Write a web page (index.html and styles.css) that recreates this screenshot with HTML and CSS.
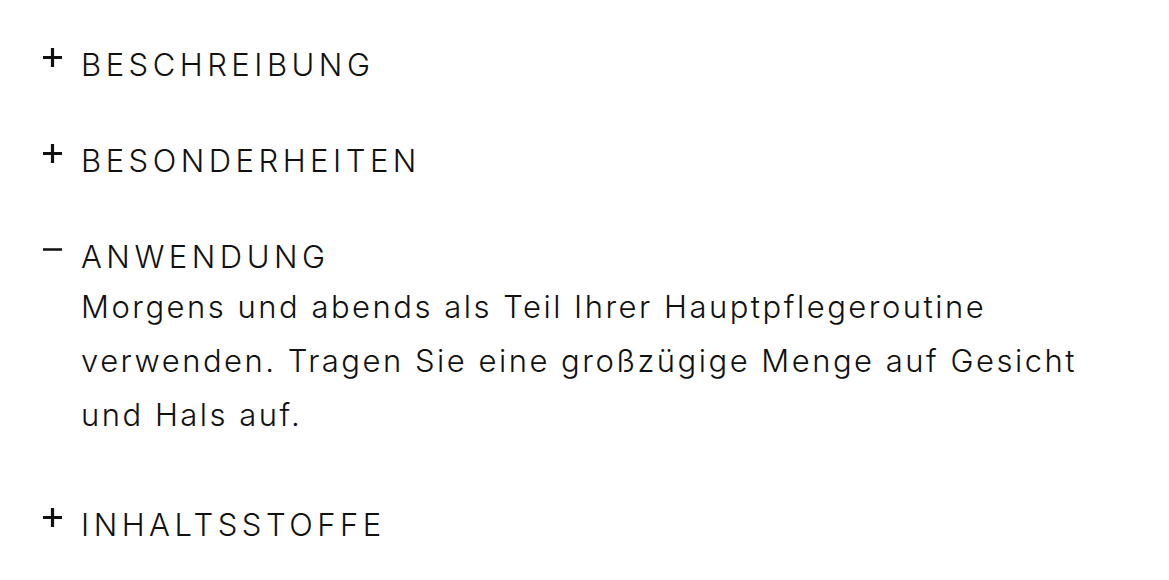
FILE: index.html
```html
<!DOCTYPE html>
<html lang="de">
<head>
<meta charset="utf-8">
<link rel="stylesheet" href="styles.css">
</head>
<body>
<div class="accordion">
  <div class="item">
    <div class="head">
      <span class="icon"><svg width="19" height="19" viewBox="0 0 19 19"><path d="M9.5 0V19M0 9.5H19" stroke="#111" stroke-width="3.2"/></svg></span>
      <span class="title">BESCHREIBUNG</span>
    </div>
  </div>
  <div class="item">
    <div class="head">
      <span class="icon"><svg width="19" height="19" viewBox="0 0 19 19"><path d="M9.5 0V19M0 9.5H19" stroke="#111" stroke-width="3.2"/></svg></span>
      <span class="title">BESONDERHEITEN</span>
    </div>
  </div>
  <div class="item open">
    <div class="head">
      <span class="icon"><svg width="19" height="19" viewBox="0 0 19 19"><path d="M0 9.5H19" stroke="#111" stroke-width="2.5"/></svg></span>
      <span class="title">ANWENDUNG</span>
    </div>
    <p class="body">Morgens und abends als Teil Ihrer Hauptpflegeroutine verwenden. Tragen Sie eine großzügige Menge auf Gesicht und Hals auf.</p>
  </div>
  <div class="item">
    <div class="head">
      <span class="icon"><svg width="19" height="19" viewBox="0 0 19 19"><path d="M9.5 0V19M0 9.5H19" stroke="#111" stroke-width="3.2"/></svg></span>
      <span class="title">INHALTSSTOFFE</span>
    </div>
  </div>
</div>
</body>
</html>
```
FILE: styles.css
```css
html, body {
  margin: 0;
  padding: 0;
  background: #fff;
}
body {
  font-family: Inter, "Liberation Sans", sans-serif;
  font-weight: 300;
  color: #111;
}
.accordion {
  display: flex;
  flex-direction: column;
  gap: 56px;
  padding: 45px 43px 0 43px;
}
.head {
  display: flex;
  align-items: flex-start;
  height: 40px;
}
.icon {
  width: 38px;
  flex: none;
  padding-top: 3px;
  display: flex;
}
.title {
  font-size: 31px;
  line-height: 40px;
  letter-spacing: 4.5px;
}
.body {
  margin: 3px 0 0 38px;
  padding-bottom: 7px;
  font-size: 31px;
  line-height: 54px;
  letter-spacing: 2.5px;
}
```
